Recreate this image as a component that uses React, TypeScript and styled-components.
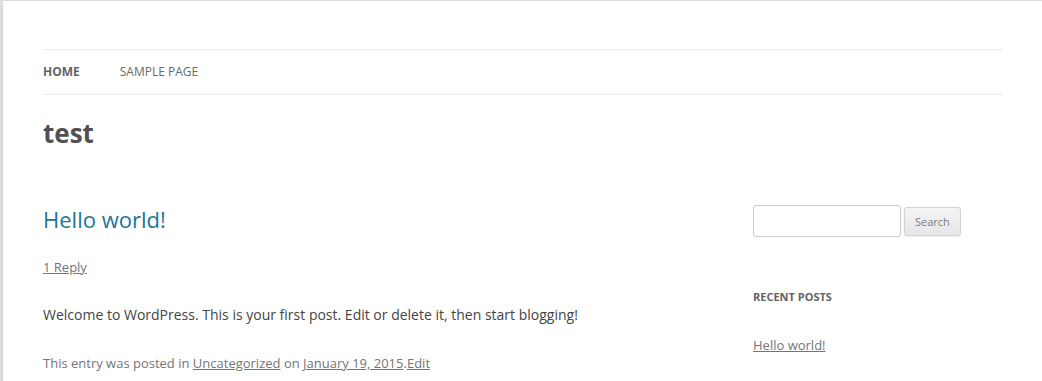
import React from "react";
import styled, { createGlobalStyle } from "styled-components";

const Global = createGlobalStyle`
  html, body { margin: 0; padding: 0; }
  body {
    background: #e6e6e6;
    font-family: "Open Sans", "Liberation Sans", sans-serif;
    font-size: 14px;
    line-height: 24px;
    color: #444;
    overflow: hidden;
  }
`;

const Site = styled.div`
  margin: 1px 0 0 3px;
  background: #fff;
  padding: 0 39px 0 40px;
  min-height: 380px;
  box-shadow: 0 2px 6px rgba(100, 100, 100, 0.3);
`;

const Header = styled.header`
  padding: 24px 0;
`;

const Nav = styled.nav`
  margin-top: 24px;
`;

const NavList = styled.ul`
  list-style: none;
  margin: 0;
  padding: 0;
  display: flex;
  border-top: 1px solid #ededed;
  border-bottom: 1px solid #ededed;
`;

const NavItem = styled.li<{ $current?: boolean }>`
  margin-right: 40px;
  font-size: 12px;
  line-height: 44px;
  text-transform: uppercase;
  color: ${(p) => (p.$current ? "#636363" : "#6a6a6a")};
  font-weight: ${(p) => (p.$current ? 700 : 400)};
`;

const SiteTitle = styled.h1`
  margin: 14px 0 0;
  font-size: 26px;
  line-height: 48px;
  font-weight: 700;
  color: #515151;
`;

const Main = styled.div`
  display: flex;
  justify-content: space-between;
  margin-top: 24px;
`;

const Primary = styled.main`
  width: 625px;
`;

const EntryTitle = styled.h2`
  margin: 0;
  font-size: 22px;
  line-height: 24px;
  font-weight: 400;
  color: #21759b;
  padding-top: 2px;
`;

const CommentsLink = styled.div`
  margin-top: 24px;
  font-size: 13px;
  line-height: 24px;
  color: #757575;
`;

const MetaLink = styled.a`
  color: #757575;
  text-decoration: underline;
`;

const EntryContent = styled.p`
  margin: 24px 0;
  font-size: 14px;
  line-height: 24px;
  color: #444;
`;

const EntryMeta = styled.footer`
  font-size: 13px;
  line-height: 24px;
  color: #757575;
`;

const Sidebar = styled.aside`
  width: 250px;
`;

const Widget = styled.section`
  margin-bottom: 48px;
`;

const SearchForm = styled.form`
  display: flex;
  align-items: center;
  gap: 3px;
`;

const SearchInput = styled.input`
  width: 134px;
  height: 18px;
  padding: 6px;
  border: 1px solid #ccc;
  border-radius: 3px;
  font-family: inherit;
  font-size: 14px;
  outline: none;
`;

const SearchButton = styled.button`
  padding: 6px 10px;
  font-family: inherit;
  font-size: 11px;
  line-height: 15px;
  color: #7c7c7c;
  background: linear-gradient(to bottom, #f4f4f4, #e6e6e6);
  border: 1px solid #d2d2d2;
  border-radius: 3px;
  box-shadow: 0 1px 2px rgba(64, 64, 64, 0.1);
`;

const WidgetTitle = styled.h3`
  margin: 0 0 24px;
  font-size: 11px;
  line-height: 24px;
  font-weight: 700;
  text-transform: uppercase;
  color: #636363;
`;

const WidgetList = styled.ul`
  list-style: none;
  margin: 0;
  padding: 0;
  font-size: 13px;
  line-height: 24px;
`;

export default function App() {
  return (
    <>
      <Global />
      <Site>
        <Header>
          <Nav>
            <NavList>
              <NavItem $current>Home</NavItem>
              <NavItem>Sample Page</NavItem>
            </NavList>
          </Nav>
          <SiteTitle>test</SiteTitle>
        </Header>
        <Main>
          <Primary>
            <EntryTitle>Hello world!</EntryTitle>
            <CommentsLink>
              <MetaLink>1 Reply</MetaLink>
            </CommentsLink>
            <EntryContent>
              Welcome to WordPress. This is your first post. Edit or delete it, then start blogging!
            </EntryContent>
            <EntryMeta>
              This entry was posted in <MetaLink>Uncategorized</MetaLink> on{" "}
              <MetaLink>January 19, 2015</MetaLink>.<MetaLink>Edit</MetaLink>
            </EntryMeta>
          </Primary>
          <Sidebar>
            <Widget>
              <SearchForm onSubmit={(e) => e.preventDefault()}>
                <SearchInput type="text" />
                <SearchButton type="submit">Search</SearchButton>
              </SearchForm>
            </Widget>
            <Widget>
              <WidgetTitle>Recent Posts</WidgetTitle>
              <WidgetList>
                <li>
                  <MetaLink>Hello world!</MetaLink>
                </li>
              </WidgetList>
            </Widget>
          </Sidebar>
        </Main>
      </Site>
    </>
  );
}
